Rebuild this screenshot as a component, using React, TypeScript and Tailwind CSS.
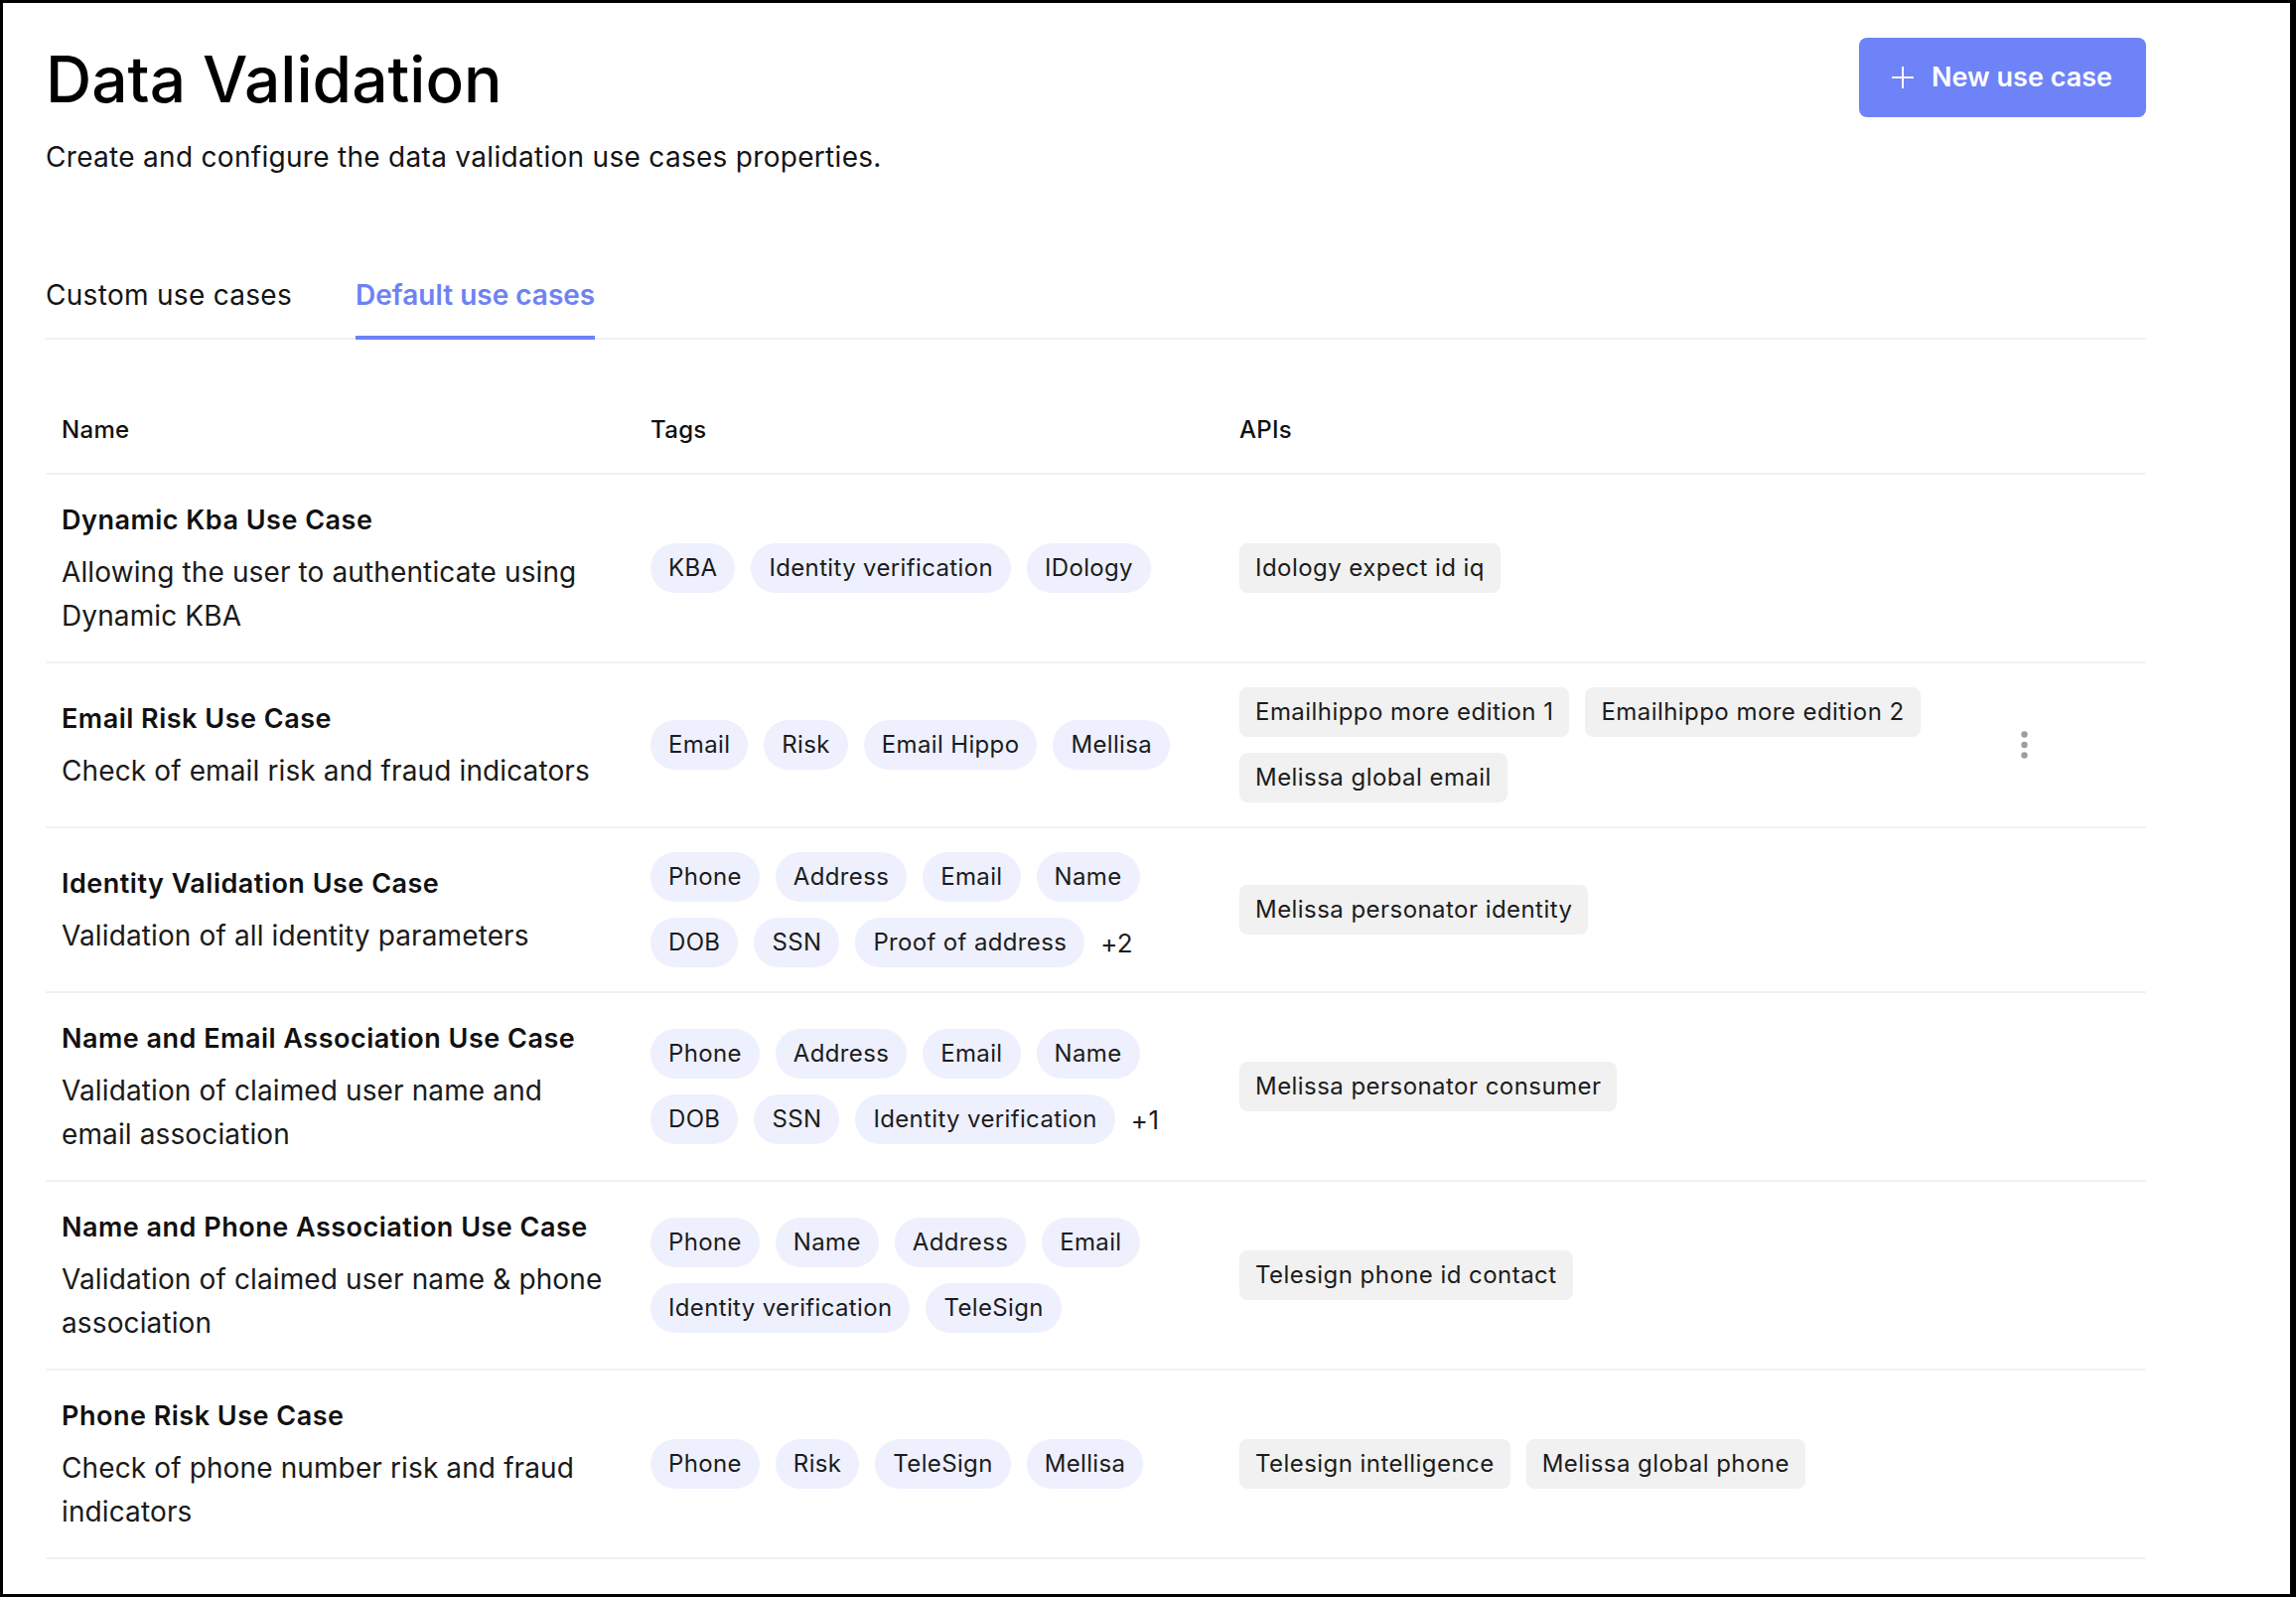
import { useState } from "react";

type UseCase = {
  name: string;
  desc: string;
  tags: string[][];
  more?: number;
  apis: string[][];
  menu?: boolean;
};

const useCases: UseCase[] = [
  {
    name: "Dynamic Kba Use Case",
    desc: "Allowing the user to authenticate using\nDynamic KBA",
    tags: [["KBA", "Identity verification", "IDology"]],
    apis: [["Idology expect id iq"]],
  },
  {
    name: "Email Risk Use Case",
    desc: "Check of email risk and fraud indicators",
    tags: [["Email", "Risk", "Email Hippo", "Mellisa"]],
    apis: [
      ["Emailhippo more edition 1", "Emailhippo more edition 2"],
      ["Melissa global email"],
    ],
    menu: true,
  },
  {
    name: "Identity Validation Use Case",
    desc: "Validation of all identity parameters",
    tags: [
      ["Phone", "Address", "Email", "Name"],
      ["DOB", "SSN", "Proof of address"],
    ],
    more: 2,
    apis: [["Melissa personator identity"]],
  },
  {
    name: "Name and Email Association Use Case",
    desc: "Validation of claimed user name and\nemail association",
    tags: [
      ["Phone", "Address", "Email", "Name"],
      ["DOB", "SSN", "Identity verification"],
    ],
    more: 1,
    apis: [["Melissa personator consumer"]],
  },
  {
    name: "Name and Phone Association Use Case",
    desc: "Validation of claimed user name & phone\nassociation",
    tags: [
      ["Phone", "Name", "Address", "Email"],
      ["Identity verification", "TeleSign"],
    ],
    apis: [["Telesign phone id contact"]],
  },
  {
    name: "Phone Risk Use Case",
    desc: "Check of phone number risk and fraud\nindicators",
    tags: [["Phone", "Risk", "TeleSign", "Mellisa"]],
    apis: [["Telesign intelligence", "Melissa global phone"]],
  },
];

function PlusIcon() {
  return (
    <svg width="22" height="22" viewBox="0 0 22 22" fill="none">
      <path d="M11 0v22M0 11h22" stroke="white" strokeWidth="2" />
    </svg>
  );
}

function KebabIcon() {
  return (
    <svg width="7" height="28" viewBox="0 0 7 28" fill="#9d9d9d">
      <circle cx="3.5" cy="3.5" r="3.2" />
      <circle cx="3.5" cy="14" r="3.2" />
      <circle cx="3.5" cy="24.5" r="3.2" />
    </svg>
  );
}

function Row({ item }: { item: UseCase }) {
  return (
    <div className="grid grid-cols-[593px_593px_1fr_136px] items-center py-[24px] border-b-2 border-[#f1f1f1]">
      {/* name + description */}
      <div className="px-[16px]">
        <div className="text-[27px] leading-[44px] font-semibold tracking-[0.5px] text-[#111111] whitespace-nowrap">
          {item.name}
        </div>
        <div className="mt-[8px] text-[28px] leading-[44px] tracking-[0.12px] text-[#1a1a1a] whitespace-pre-line">
          {item.desc}
        </div>
      </div>

      {/* tags */}
      <div className="px-[16px] flex flex-col gap-[16px]">
        {item.tags.map((line, i) => (
          <div key={i} className="flex items-center gap-[16px]">
            {line.map((t) => (
              <span
                key={t}
                className="h-[50px] px-[18px] flex items-center rounded-full bg-[#eef0fd] text-[24px] tracking-[0.35px] text-[#1c1c1c] whitespace-nowrap"
              >
                {t}
              </span>
            ))}
            {item.more && i === item.tags.length - 1 ? (
              <span className="text-[26px] tracking-[0.3px] text-[#1c1c1c]">+{item.more}</span>
            ) : null}
          </div>
        ))}
      </div>

      {/* apis */}
      <div className="px-[16px] flex flex-col gap-[16px]">
        {item.apis.map((line, i) => (
          <div key={i} className="flex items-center gap-[16px]">
            {line.map((a) => (
              <span
                key={a}
                className="h-[50px] px-[16px] flex items-center rounded-[8px] bg-[#f1f1f1] text-[24px] tracking-[0.45px] text-[#1c1c1c] whitespace-nowrap"
              >
                {a}
              </span>
            ))}
          </div>
        ))}
      </div>

      <div className="pl-[10px] flex items-center">
        {item.menu ? <KebabIcon /> : null}
      </div>
    </div>
  );
}

export default function App() {
  const [tab, setTab] = useState("default");

  const tabClass = (active: boolean) =>
    active
      ? "-mb-[2px] pb-[23px] border-b-4 border-[#6e82f5] text-[28px] leading-[36px] font-semibold text-[#6e82f5]"
      : "-mb-[2px] pb-[23px] border-b-4 border-transparent text-[28px] leading-[36px] tracking-[0.3px] text-[#141414]";

  return (
    <div className="w-[2312px] h-[1608px] overflow-hidden bg-white border-t-[3px] border-l-[3px] border-r-[6px] border-b-[3px] border-black font-['Inter','Noto_Sans',sans-serif] text-[#111111]">
      <div className="w-[2115px] ml-[43px] pt-[35px]">
        {/* page header */}
        <div className="flex items-start justify-between">
          <div>
            <h1 className="mt-[10px] text-[64px] leading-[64px] font-medium text-black">
              Data Validation
            </h1>
            <p className="mt-[26px] text-[28px] leading-[40px] tracking-[0.3px] text-[#141414]">
              Create and configure the data validation use cases properties.
            </p>
          </div>
          <button className="h-[80px] pl-[33px] pr-[34px] flex items-center gap-[18px] rounded-[8px] bg-[#6e83f7] text-white text-[27px] font-semibold">
            <PlusIcon />
            New use case
          </button>
        </div>

        {/* tabs */}
        <div className="mt-[101px] flex gap-[64px] border-b-2 border-[#f1f1f1]">
          <button onClick={() => setTab("custom")} className={tabClass(tab === "custom")}>
            Custom use cases
          </button>
          <button onClick={() => setTab("default")} className={tabClass(tab === "default")}>
            Default use cases
          </button>
        </div>

        {/* table */}
        <div className="mt-[47px]">
          <div className="grid grid-cols-[593px_593px_1fr_136px] pt-[28px] pb-[27px] border-b-2 border-[#f1f1f1] text-[24px] leading-[32px] font-medium tracking-[0.3px] text-[#111111]">
            <div className="px-[16px]">Name</div>
            <div className="px-[16px]">Tags</div>
            <div className="px-[16px]">APIs</div>
            <div />
          </div>
          {useCases.map((u) => (
            <Row key={u.name} item={u} />
          ))}
        </div>
      </div>
    </div>
  );
}
